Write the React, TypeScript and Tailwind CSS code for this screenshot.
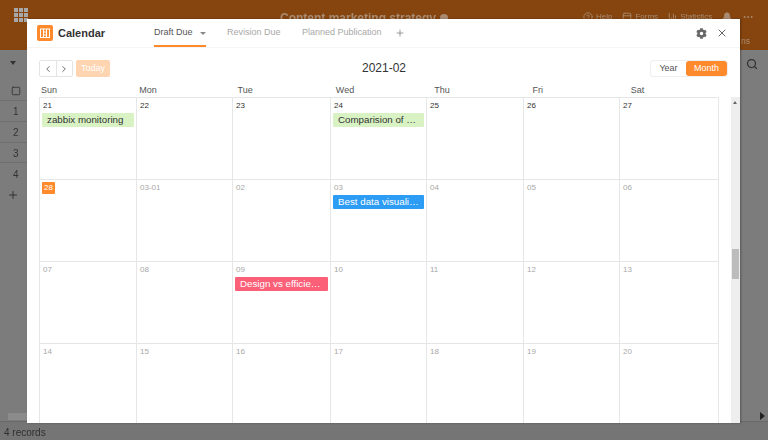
import { ChevronLeft, ChevronRight, Plus, X, Search, Bell, Ellipsis, CircleHelp, ChartColumn, Square, PanelTop } from "lucide-react";
import { FaCog } from "react-icons/fa";

const days = ["Sun", "Mon", "Tue", "Wed", "Thu", "Fri", "Sat"];

type Cell = { label: string; muted?: boolean; today?: boolean; event?: { title: string; color: string } };

const weeks: Cell[][] = [
  [
    { label: "21", event: { title: "zabbix monitoring", color: "bg-[#d9f2c4] text-[#333333]" } },
    { label: "22" },
    { label: "23" },
    { label: "24", event: { title: "Comparision of …", color: "bg-[#d9f2c4] text-[#333333]" } },
    { label: "25" },
    { label: "26" },
    { label: "27" },
  ],
  [
    { label: "28", today: true },
    { label: "03-01", muted: true },
    { label: "02", muted: true },
    { label: "03", muted: true, event: { title: "Best data visuali…", color: "bg-[#2d9cf4] text-white" } },
    { label: "04", muted: true },
    { label: "05", muted: true },
    { label: "06", muted: true },
  ],
  [
    { label: "07", muted: true },
    { label: "08", muted: true },
    { label: "09", muted: true, event: { title: "Design vs efficie…", color: "bg-[#fb6078] text-white" } },
    { label: "10", muted: true },
    { label: "11", muted: true },
    { label: "12", muted: true },
    { label: "13", muted: true },
  ],
  [
    { label: "14", muted: true },
    { label: "15", muted: true },
    { label: "16", muted: true },
    { label: "17", muted: true },
    { label: "18", muted: true },
    { label: "19", muted: true },
    { label: "20", muted: true },
  ],
];

const colWidths = "grid-cols-[97px_96px_98px_96px_97px_96px_99px]";

function Background() {
  return (
    <div className="absolute inset-0 flex flex-col bg-[#7c7c7c] blur-[0.4px]">
      {/* Dimmed base header */}
      <div className="h-[50px] shrink-0 bg-[#86450f] relative text-[#a98b72]">
        <div className="absolute left-[14px] top-[8px] grid grid-cols-3 gap-[1px]">
          {Array.from({ length: 9 }).map((_, i) => (
            <div key={i} className="w-[4px] h-[4px] bg-[#a8a8a8]" />
          ))}
        </div>
        <div className="absolute left-[280px] top-[9px] flex items-center gap-[4px] text-[12px] font-bold">
          Content marketing strategy
          <span className="w-[8px] h-[8px] rounded-full bg-[#a98b72]" />
        </div>
        <div className="absolute left-[583px] top-[11px] flex items-center text-[8px] leading-[10px]">
          <CircleHelp size={10} />
          <span className="ml-[3px]">Help</span>
          <PanelTop className="ml-[10px]" size={10} />
          <span className="ml-[3px]">Forms</span>
          <ChartColumn className="ml-[10px]" size={10} />
          <span className="ml-[2px]">Statistics</span>
          <Bell className="ml-[10px]" size={10} fill="currentColor" />
          <Ellipsis className="ml-[10px]" size={12} />
        </div>
        <div className="absolute left-[741px] top-[35px] text-[8.5px]">ns</div>
      </div>
      <div className="flex-1 relative text-[10px] text-[#333333]">
        <div className="absolute left-[10px] top-[11px] w-0 h-0 border-x-[3px] border-x-transparent border-t-[4px] border-t-[#333333]" />
        <Square className="absolute left-[11px] top-[36px]" size={10} />
        <div className="absolute left-0 top-[50px] w-[27px] h-[63px] divide-y divide-[#6f6f6f] border-y border-[#6f6f6f]">
          <div className="h-[21px]" />
          <div className="h-[21px]" />
          <div className="h-[21px]" />
        </div>
        <div className="absolute left-[13px] top-[54px]">1</div>
        <div className="absolute left-[13px] top-[75px]">2</div>
        <div className="absolute left-[13px] top-[96px]">3</div>
        <div className="absolute left-[13px] top-[117px]">4</div>
        <Plus className="absolute left-[7px] top-[139px]" size={12} />
        <Search className="absolute left-[746px] top-[8px]" size={12} strokeWidth={2.5} />
        <div className="absolute left-[8px] top-[363px] w-[19px] h-[7px] bg-[#8b8b8b]" />
        <div className="absolute left-[760px] top-[362px] w-0 h-0 border-y-[4px] border-y-transparent border-l-[5px] border-l-[#222222]" />
      </div>
      <div className="h-[19px] shrink-0 px-[4px] pt-[3px] text-[10px] leading-[16px] text-[#2f2f2f] bg-[#757575] border-t border-[#6a6a6a]">4 records</div>
    </div>
  );
}

export default function App() {
  return (
    <div className="relative w-[768px] h-[440px] overflow-hidden font-['Liberation_Sans',sans-serif]">
      <Background />

      {/* Modal */}
      <div className="absolute left-[27px] top-[19px] w-[713px] h-[404px] bg-white flex flex-col overflow-hidden shadow-[1px_0_2px_rgba(0,0,0,0.3)]">
        {/* Header */}
        <div className="h-[29px] shrink-0 flex items-center border-b border-[#f5f5f5] relative">
          <div className="ml-[10px] w-[16px] h-[16px] rounded-[2px] bg-[#ff8a2b] flex items-center justify-center">
            <svg width="10" height="10" viewBox="0 0 10 10" fill="none" stroke="#ffffff" strokeWidth="1">
              <rect x="0.5" y="1" width="9" height="8.5" />
              <path d="M3.5 1V9.5M6.5 1V9.5M3.5 4H6.5M3.5 7H6.5" />
            </svg>
          </div>
          <span className="ml-[5px] w-[96px] shrink-0 text-[11px] font-bold text-[#333333]">Calendar</span>
          <div className="flex h-full items-center text-[9px] whitespace-nowrap">
            <div className="h-full w-[52px] pt-[2px] flex items-center border-b-2 border-[#ff8a2b] text-[#555555]">
              Draft Due
              <span className="ml-[7px] w-0 h-0 border-x-[3px] border-x-transparent border-t-[3px] border-t-[#888888]" />
            </div>
            <span className="ml-[21px] w-[54px] text-[#a8a8a8]">Revision Due</span>
            <span className="ml-[21px] w-[80px] text-[#a8a8a8]">Planned Publication</span>
            <Plus className="ml-[13px] text-[#999999]" size={10} strokeWidth={2.5} />
          </div>
          <div className="ml-auto mr-[12px] flex items-center gap-[9px] text-[#666666]">
            <FaCog size={11} />
            <X size={12} />
          </div>
        </div>

        {/* Toolbar */}
        <div className="relative h-[29px] shrink-0 pl-[12px] pr-[12px] flex items-end justify-between">
          <div className="flex items-center gap-[3px]">
            <div className="flex h-[17px] w-[34px] border border-[#e4e4e4] rounded-[2px] text-[#555555]">
              <span className="flex-1 flex items-center justify-center border-r border-[#e4e4e4]"><ChevronLeft size={10} /></span>
              <span className="flex-1 flex items-center justify-center"><ChevronRight size={10} /></span>
            </div>
            <span className="h-[17px] px-[5px] rounded-[2px] bg-[#ffd4b0] text-white text-[9px] leading-[17px]">Today</span>
          </div>
          <div className="absolute left-[335px] top-[11px] text-[12px] text-[#333333]">2021-02</div>
          <div className="flex h-[17px] w-[78px] items-center border border-[#eeeeee] rounded-[3px] text-[9px]">
            <span className="w-[35px] text-center text-[#555555]">Year</span>
            <span className="flex-1 h-[15px] leading-[15px] text-center rounded-[3px] bg-[#ff8a2b] text-white">Month</span>
          </div>
        </div>

        {/* Weekday header */}
        <div className="ml-[14px] mt-[2px] h-[18px] shrink-0 pr-[11px] grid grid-cols-7 pt-[4px] text-[9px] leading-[14px] text-[#555555]">
          {days.map((day) => (
            <div key={day}>{day}</div>
          ))}
        </div>

        {/* Month grid + scrollbar */}
        <div className="relative flex-1 flex pl-[12px] overflow-hidden">
          <div className="w-[680px] shrink-0 border-t border-[#e6e6e6]">
            {weeks.map((week, i) => (
              <div key={i} className={`grid ${colWidths} h-[82px] border-b border-[#e6e6e6] border-l`}>
                {week.map((cell, j) => (
                  <div key={j} className="border-r border-[#e6e6e6] pt-[2px] px-[1px] h-[82px]">
                    <div className={`ml-[1px] text-[8px] leading-[12px] px-[1px] ${cell.today ? "bg-[#ff8a2b] text-white w-[13px] rounded-[1px] text-center" : cell.muted ? "text-[#a8a8a8]" : "text-[#333333]"}`}>
                      {cell.label}
                    </div>
                    {cell.event && (
                      <div className={`mt-[1px] mx-[1px] h-[14px] rounded-[1px] pl-[5px] text-[9.75px] leading-[14px] whitespace-nowrap overflow-hidden ${cell.event.color}`}>
                        {cell.event.title}
                      </div>
                    )}
                  </div>
                ))}
              </div>
            ))}
          </div>
          <div className="absolute right-0 top-0 bottom-0 w-[9px] bg-[#eeeeee]">
            <div className="absolute top-[4px] left-[2px] w-0 h-0 border-x-[2.5px] border-x-transparent border-b-[3px] border-b-[#666666]" />
            <div className="absolute top-[152px] left-[1px] w-[7px] h-[30px] bg-[#bcbcbc]" />
          </div>
        </div>
      </div>
    </div>
  );
}
